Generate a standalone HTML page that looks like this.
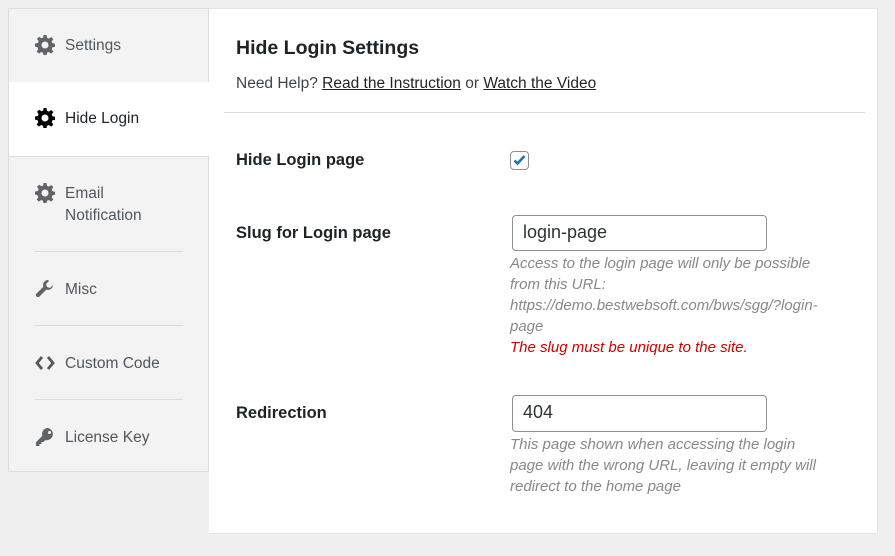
<!DOCTYPE html>
<html><head><style>
body{margin:0;background:#f0f0f1;font-family:"Liberation Sans",sans-serif;width:895px;height:556px;position:relative;overflow:hidden;color:#1d2327}
.side{position:absolute;left:8px;top:8px;width:201px;height:464px;background:#f3f3f3;border:1px solid #dcdcde;box-sizing:border-box}
.tab{position:absolute;left:0;width:201px;color:#50575e;font-size:15.5px}
.tab .ic{position:absolute;left:26px;width:20px;height:20px}
.tab .t{position:absolute;left:56px;line-height:22px}
.sep{position:absolute;left:26px;width:148px;height:1px;background:#dcdcde}
.main{position:absolute;left:209px;top:8px;width:669px;height:526px;background:#fff;border:1px solid #e2e4e7;border-left:none;box-sizing:border-box}
.lbl{position:absolute;left:236px;font-weight:bold;font-size:16.5px;color:#1d2327}
.inp{position:absolute;left:512px;width:255px;height:36px;border:1px solid #8c8f94;border-radius:4px;box-sizing:border-box;font-size:18px;padding:6px 10px;color:#2c3338}
.desc{position:absolute;left:510px;width:316px;font-style:italic;font-size:15px;line-height:21px;color:#888}
</style></head><body>
<div class="side">
 <div class="tab" style="top:0;height:73px;border-bottom:1px solid #dcdcde"><svg class="ic" style="top:26px" viewBox="0 0 20 20"><path fill="#60646a" d="M8.5 0h3l.5 2.8 1.8.8 2.4-1.6 2.1 2.1-1.6 2.4.8 1.8 2.8.5v3l-2.8.5-.8 1.8 1.6 2.4-2.1 2.1-2.4-1.6-1.8.8-.5 2.8h-3l-.5-2.8-1.8-.8-2.4 1.6-2.1-2.1 1.6-2.4-.8-1.8L0 11.5v-3l2.8-.5.8-1.8L2 3.8 4.1 1.7l2.4 1.6L8.3 2.5zM10 6.5a3.5 3.5 0 1 0 0 7 3.5 3.5 0 0 0 0-7z"/></svg><span class="t" style="top:26px">Settings</span></div>
 <div class="tab" style="top:73px;height:74px;background:#fff;width:201px;color:#1d2327;border-bottom:1px solid #dcdcde"><svg class="ic" style="top:26px" viewBox="0 0 20 20"><path fill="#000" d="M8.5 0h3l.5 2.8 1.8.8 2.4-1.6 2.1 2.1-1.6 2.4.8 1.8 2.8.5v3l-2.8.5-.8 1.8 1.6 2.4-2.1 2.1-2.4-1.6-1.8.8-.5 2.8h-3l-.5-2.8-1.8-.8-2.4 1.6-2.1-2.1 1.6-2.4-.8-1.8L0 11.5v-3l2.8-.5.8-1.8L2 3.8 4.1 1.7l2.4 1.6L8.3 2.5zM10 6.5a3.5 3.5 0 1 0 0 7 3.5 3.5 0 0 0 0-7z"/></svg><span class="t" style="top:26px">Hide Login</span></div>
 <div class="tab" style="top:174px"><svg class="ic" style="top:0" viewBox="0 0 20 20"><path fill="#60646a" d="M8.5 0h3l.5 2.8 1.8.8 2.4-1.6 2.1 2.1-1.6 2.4.8 1.8 2.8.5v3l-2.8.5-.8 1.8 1.6 2.4-2.1 2.1-2.4-1.6-1.8.8-.5 2.8h-3l-.5-2.8-1.8-.8-2.4 1.6-2.1-2.1 1.6-2.4-.8-1.8L0 11.5v-3l2.8-.5.8-1.8L2 3.8 4.1 1.7l2.4 1.6L8.3 2.5zM10 6.5a3.5 3.5 0 1 0 0 7 3.5 3.5 0 0 0 0-7z"/></svg><span class="t" style="top:0">Email<br>Notification</span></div>
 <div class="sep" style="top:242px"></div>
 <div class="tab" style="top:270px"><svg class="ic" style="top:0" viewBox="0 0 20 20"><path fill="#60646a" d="M13 1a5 5 0 0 0-4.6 6.8L1.5 14.5a2 2 0 0 0 3 3l6.8-6.9A5 5 0 0 0 18 6l-3 3-3-1-1-3 3-3z"/></svg><span class="t">Misc</span></div>
 <div class="sep" style="top:316px"></div>
 <div class="tab" style="top:344px"><svg class="ic" style="top:0" viewBox="0 0 20 20"><path fill="none" stroke="#50575e" stroke-width="2.8" d="M7 4l-5 6 5 6M13 4l5 6-5 6"/></svg><span class="t">Custom Code</span></div>
 <div class="sep" style="top:390px"></div>
 <div class="tab" style="top:418px"><svg class="ic" style="top:0" viewBox="0 0 20 20"><path fill="#60646a" d="M13 1a6 6 0 0 0-5.7 7.9L1 15.2V19h3.5v-2h2v-2h2l1.8-1.9A6 6 0 1 0 13 1zm1.5 3a1.5 1.5 0 1 1 0 3 1.5 1.5 0 0 1 0-3z"/></svg><span class="t">License Key</span></div>
</div>
<div class="main">
 <div style="position:absolute;left:27px;top:28px;font-size:19.5px;font-weight:bold;color:#1d2327">Hide Login Settings</div>
 <div style="position:absolute;left:27px;top:66px;font-size:15.5px;color:#3c434a">Need Help? <u style="color:#1d2327">Read the Instruction</u> or <u style="color:#1d2327">Watch the Video</u></div>
 <div style="position:absolute;left:15px;top:103px;width:641px;height:1px;background:#dcdcde"></div>
</div>
<div class="lbl" style="top:151px">Hide Login page</div>
<div style="position:absolute;left:510px;top:151px;width:19px;height:19px;border:1px solid #8c8f94;border-radius:4px;box-sizing:border-box"><svg width="17" height="17" viewBox="0 0 17 17"><path d="M3.5 8.5l3 3 7-7.5" fill="none" stroke="#2271b1" stroke-width="2.6"/></svg></div>
<div class="lbl" style="top:224px">Slug for Login page</div>
<div class="inp" style="top:215px">login-page</div>
<div class="desc" style="top:253px">Access to the login page will only be possible from this URL: https://demo.bestwebsoft.com/bws/sgg/?login-page<br><span style="color:#d00000">The slug must be unique to the site.</span></div>
<div class="lbl" style="top:404px">Redirection</div>
<div class="inp" style="top:395px;height:37px">404</div>
<div class="desc" style="top:434px">This page shown when accessing the login page with the wrong URL, leaving it empty will redirect to the home page</div>
</body></html>
